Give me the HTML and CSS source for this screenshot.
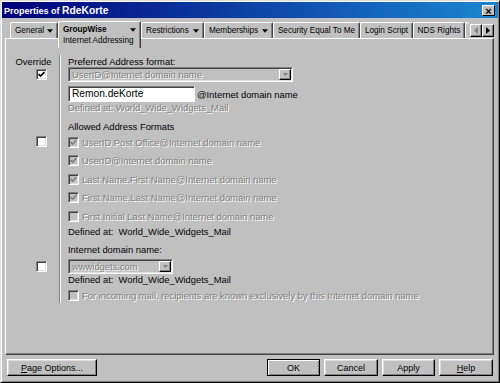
FILE: index.html
```html
<!DOCTYPE html>
<html lang="en">
<head>
    <meta charset="UTF-8">
    <title>Properties of RdeKorte</title>
    <link rel="stylesheet" href="styles.css">
</head>
<body>
<div class="window">
  <div class="titlebar">
    <span class="title">Properties of <span class="name">RdeKorte</span></span>
    <span class="close">&#215;</span>
  </div>

  <div class="tabstrip">
    <div class="tab t-general">General <svg class="arrow" viewBox="0 0 7 4"><polygon points="0,0 7,0 3.5,4"/></svg></div>
    <div class="tab active t-groupwise">
      <div class="tab-main"><b>GroupWise</b> <svg class="arrow" viewBox="0 0 7 4"><polygon points="0,0 7,0 3.5,4"/></svg></div>
      <div class="tab-sub">Internet Addressing</div>
    </div>
    <div class="tab t-restrict">Restrictions <svg class="arrow" viewBox="0 0 7 4"><polygon points="0,0 7,0 3.5,4"/></svg></div>
    <div class="tab t-member">Memberships <svg class="arrow" viewBox="0 0 7 4"><polygon points="0,0 7,0 3.5,4"/></svg></div>
    <div class="tab t-security">Security Equal To Me</div>
    <div class="tab t-login">Login Script</div>
    <div class="tab t-nds">NDS Rights</div>
    <div class="tab t-stub"></div>
    <div class="tab-scroll">
      <span class="sbtn"><svg viewBox="0 0 4 7"><polygon class="off" points="4,0 4,7 0,3.5"/></svg></span>
      <span class="sbtn"><svg viewBox="0 0 4 7"><polygon points="0,0 0,7 4,3.5"/></svg></span>
    </div>
  </div>

  <div class="panel">
    <div class="group g1">
      <div class="ov">
        <div class="ov-label">Override</div>
        <span class="cb white"><svg viewBox="0 0 7 7"><polyline points="0.5,3 2.5,5 6.5,1"/></svg></span>
      </div>
      <div class="fields">
        <div class="line">Preferred Address format:</div>
        <div class="select wide">
          <span class="dis">UserID@Internet domain name</span>
          <span class="drop"><svg viewBox="0 0 7 4"><polygon points="0,0 7,0 3.5,4"/></svg></span>
        </div>
        <div class="input-row">
          <div class="input">Remon.deKorte</div>
          <span>@Internet domain name</span>
        </div>
        <div class="line dis">Defined at: World_Wide_Widgets_Mail</div>
      </div>
    </div>

    <div class="group g2">
      <div class="ov">
        <span class="cb white"></span>
      </div>
      <div class="fields">
        <div class="line">Allowed Address Formats</div>
        <div class="item"><span class="cb"><svg viewBox="0 0 7 7"><polyline points="0.5,3 2.5,5 6.5,1"/></svg></span><span class="dis">UserID.Post Office@Internet domain name</span></div>
        <div class="item"><span class="cb"><svg viewBox="0 0 7 7"><polyline points="0.5,3 2.5,5 6.5,1"/></svg></span><span class="dis">UserID@Internet domain name</span></div>
        <div class="item"><span class="cb"><svg viewBox="0 0 7 7"><polyline points="0.5,3 2.5,5 6.5,1"/></svg></span><span class="dis">Last Name.First Name@Internet domain name</span></div>
        <div class="item"><span class="cb"><svg viewBox="0 0 7 7"><polyline points="0.5,3 2.5,5 6.5,1"/></svg></span><span class="dis">First Name.Last Name@Internet domain name</span></div>
        <div class="item"><span class="cb"></span><span class="dis">First Initial Last Name@Internet domain name</span></div>
        <div class="line">Defined at:&nbsp; World_Wide_Widgets_Mail</div>
      </div>
    </div>

    <div class="group g3">
      <div class="ov">
        <span class="cb white"></span>
      </div>
      <div class="fields">
        <div class="line">Internet domain name:</div>
        <div class="select narrow">
          <span class="dis">wwwidgets.com</span>
          <span class="drop"><svg viewBox="0 0 7 4"><polygon points="0,0 7,0 3.5,4"/></svg></span>
        </div>
        <div class="line">Defined at:&nbsp; World_Wide_Widgets_Mail</div>
        <div class="item last"><span class="cb"></span><span class="dis">For incoming mail, recipients are known exclusively by this Internet domain name</span></div>
      </div>
    </div>
  </div>

  <div class="footer">
    <button class="btn b-page"><u>P</u>age Options...</button>
    <div class="spacer"></div>
    <button class="btn default b-ok">OK</button>
    <button class="btn b-cancel">Cancel</button>
    <button class="btn b-apply">Apply</button>
    <button class="btn b-help"><u>H</u>elp</button>
  </div>
</div>
</body>
</html>
```

FILE: styles.css
```css
*{
    box-sizing: border-box;
}

body{
    margin: 0;
    font-family: "Liberation Sans", Arial, sans-serif;
    font-size: 9.4px;
    background-color: #c0c0c0;
    color: #000;
}

.window{
    width: 500px;
    height: 383px;
    padding: 1px;
    border: 1px solid;
    border-color: #dfdfdf #000 #000 #dfdfdf;
    box-shadow: inset 1px 1px #fff, inset -1px -1px #808080;
}

/* title bar */
.titlebar{
    height: 16px;
    display: flex;
    align-items: center;
    justify-content: space-between;
    padding: 0 3px 0 2px;
    background: linear-gradient(to right, #00007b, #1a86d2);
    color: #fff;
    font-weight: bold;
    font-size: 9px;
}

.titlebar .name{
    font-size: 10.3px;
}

.close{
    width: 13px;
    height: 11px;
    background: #c0c0c0;
    color: #000;
    font-size: 11px;
    line-height: 10px;
    text-align: center;
    border: 1px solid;
    border-color: #fff #000 #000 #fff;
}

/* tabs */
.tabstrip{
    display: flex;
    align-items: flex-start;
    height: 17px;
    margin-top: 3px;
    padding-left: 8px;
    font-size: 8.2px;
}

.tab{
    display: flex;
    align-items: center;
    justify-content: space-between;
    height: 16px;
    margin-top: 1px;
    padding: 0 4px;
    border-top: 1px solid #fff;
    border-left: 1px solid #fff;
    border-right: 1px solid #404040;
    border-radius: 2px 2px 0 0;
    box-shadow: inset -1px 0 #808080;
    background: #c0c0c0;
    white-space: nowrap;
}

.tab .arrow{
    width: 6px;
    height: 4px;
    fill: #000;
}

.tab.active{
    position: relative;
    z-index: 2;
    height: 27px;
    margin-top: 0;
    flex-direction: column;
    align-items: stretch;
    justify-content: flex-start;
    padding: 2px 4px 0 4px;
}

.tab-main{
    display: flex;
    justify-content: space-between;
    align-items: center;
    height: 11px;
}

.tab-sub{
    margin-top: 1px;
}

.t-general{ width: 48px; }
.t-groupwise{ width: 83px; }
.t-restrict{ width: 63px; }
.t-member{ width: 69px; }
.t-security{ width: 87px; justify-content: center; }
.t-login{ width: 53px; justify-content: center; }
.t-nds{ width: 52px; justify-content: center; }
.t-stub{ width: 4px; padding: 0; border-right: none; box-shadow: none; }

.tab-scroll{
    display: flex;
    margin-left: 1px;
    margin-top: 3px;
}

.sbtn{
    display: flex;
    align-items: center;
    justify-content: center;
    width: 12px;
    height: 13px;
    border: 1px solid;
    border-color: #fff #000 #000 #fff;
    box-shadow: inset -1px -1px #808080;
}

.sbtn svg{
    width: 4px;
    height: 7px;
    fill: #000;
}

.sbtn .off{
    fill: #808080;
}

/* property page */
.panel{
    height: 317px;
    margin: 0 4px 0 3px;
    padding-top: 16px;
    border: 1px solid;
    border-color: #fff #404040 #404040 #fff;
    box-shadow: inset -1px -1px #808080;
}

.group{
    display: flex;
}

.ov{
    width: 54px;
    border-right: 1px solid #808080;
    box-shadow: 1px 0 #fff;
}

.ov-label{
    line-height: 11px;
    text-align: center;
    padding-left: 2px;
}

.ov .cb{
    margin-left: 30px;
}

.fields{
    flex: 1;
    padding-left: 8px;
}

.g1 .ov{ padding-top: 1px; }
.g1 .ov .cb{ margin-top: 2px; }
.g1 .fields{ padding-top: 1px; }
.g1 .fields .line:first-child{ line-height: 11px; }

.g2 .ov{ padding-top: 22px; }
.g2 .fields{ padding-top: 7px; }

.g3 .ov{ padding-top: 23px; }
.g3 .fields{ padding-top: 6px; padding-bottom: 1px; }

.line{
    line-height: 12px;
    white-space: nowrap;
}

.dis{
    color: #808080;
    text-shadow: 1px 1px 0 #fff;
}

/* checkboxes */
.cb{
    display: inline-flex;
    align-items: center;
    justify-content: center;
    width: 11px;
    height: 11px;
    flex: none;
    background: #c0c0c0;
    border: 1px solid;
    border-color: #808080 #fff #fff #808080;
    box-shadow: inset 1px 1px #404040, inset -1px -1px #dfdfdf;
}

.cb.white{
    background: #fff;
}

.cb svg{
    width: 7px;
    height: 7px;
    fill: none;
    stroke: #808080;
    stroke-width: 1.7;
}

.cb.white svg{
    stroke: #000;
}

.item{
    display: flex;
    align-items: center;
    gap: 3px;
    height: 18.5px;
    white-space: nowrap;
}

.item.last{
    height: 12px;
    margin-top: 4px;
}

/* drop-down lists */
.select{
    display: flex;
    align-items: center;
    justify-content: space-between;
    height: 15px;
    padding: 0 1px 0 3px;
    border: 1px solid;
    border-color: #808080 #fff #fff #808080;
    box-shadow: inset 1px 1px #404040, inset -1px -1px #dfdfdf;
}

.select.wide{ width: 225px; }
.select.narrow{ width: 105px; margin-top: 3px; }

.drop{
    display: flex;
    align-items: center;
    justify-content: center;
    width: 12px;
    height: 11px;
    border: 1px solid;
    border-color: #fff #000 #000 #fff;
    box-shadow: inset -1px -1px #808080;
}

.drop svg{
    width: 5px;
    height: 3px;
    fill: #808080;
}

.input-row{
    display: flex;
    align-items: center;
    gap: 2px;
    margin-top: 4px;
}

.input{
    width: 127px;
    height: 16px;
    padding-left: 3px;
    font-size: 10.2px;
    line-height: 14px;
    background: #fff;
    border: 1px solid;
    border-color: #808080 #fff #fff #808080;
    box-shadow: inset 1px 1px #404040;
}

/* buttons */
.footer{
    display: flex;
    gap: 4px;
    padding: 4px 5px 0 5px;
}

.spacer{
    flex: 1;
}

.btn{
    height: 17px;
    padding: 0;
    font-family: inherit;
    font-size: 9px;
    background: #c0c0c0;
    color: #000;
    border: 1px solid;
    border-color: #fff #000 #000 #fff;
    box-shadow: inset -1px -1px #808080, inset 1px 1px #dfdfdf;
}

.btn.default{
    border-color: #000;
    box-shadow: inset 1px 1px #fff, inset -1px -1px #808080;
}

.b-page{ width: 90px; }
.b-ok{ width: 53px; }
.b-cancel{ width: 54px; }
.b-apply{ width: 53px; }
.b-help{ width: 54px; }
```
